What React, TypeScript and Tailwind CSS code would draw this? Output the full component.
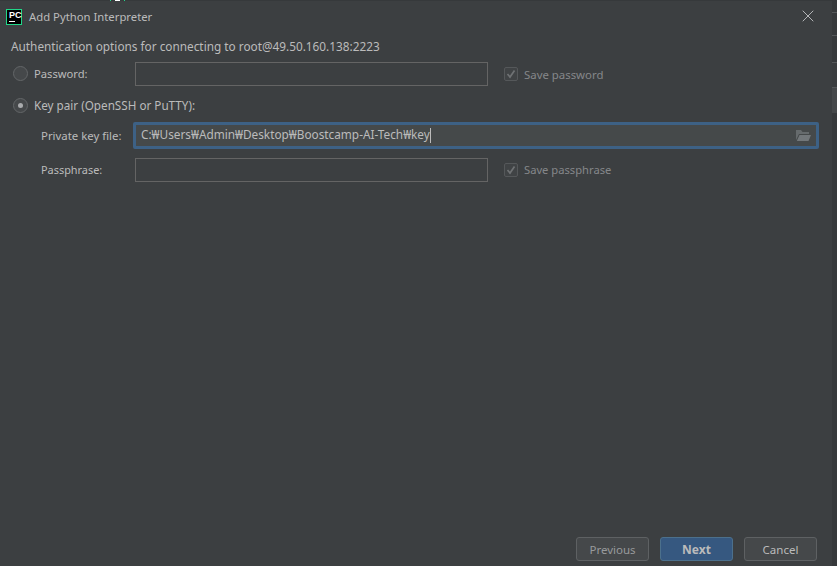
import { X } from "lucide-react"

function Field() {
  return <div className="h-6 w-[353px] border border-[#646464] bg-[#3c3f41]" />
}

function SaveCheck({ label, size }: { label: string; size: string }) {
  return (
    <div className="flex items-center ml-[16px] gap-[6px]">
      <svg width="14" height="14" viewBox="0 0 14 14">
        <rect x="0.5" y="0.5" width="13" height="13" rx="1.5" fill="#404345" stroke="#55585a" />
        <path d="M3.5 7 L6 10 L10.5 3.5" fill="none" stroke="#6f7274" strokeWidth="1.7" />
      </svg>
      <span className={`${size} pt-[2px] text-[#85878a]`}>{label}</span>
    </div>
  )
}

function Radio({ checked }: { checked?: boolean }) {
  return (
    <div className="w-[15px] h-[15px] rounded-full border border-[#636668] bg-[#45484a] flex items-center justify-center">
      {checked && <div className="w-[5px] h-[5px] rounded-full bg-[#a9abad]" />}
    </div>
  )
}

export default function App() {
  return (
    <div className="w-[837px] h-[566px] overflow-hidden bg-[#36393b] flex flex-col font-['Noto_Sans',sans-serif] text-[#bbbbbb]">
      <div className="h-px flex shrink-0">
        <div className="w-[110px]" />
        <div className="w-px bg-[#21d789]" />
        <div className="w-[4px]" />
        <div className="w-[5px] bg-white" />
        <div className="w-[4px]" />
        <div className="w-px bg-[#21d789]" />
      </div>
      <div className="flex-1 flex">
        <div className="w-[832px] bg-[#3c3f41] flex flex-col">
          {/* title bar */}
          <div className="h-[31px] flex items-center pl-[6px] pr-[14px] shrink-0">
            <div className="w-[16px] h-[16px] bg-black border border-[#21d789] flex flex-col items-start pl-[2px] pt-px">
              <span className="font-['Liberation_Sans',sans-serif] font-bold text-[9px] leading-[8px] text-white">PC</span>
              <div className="w-[6px] h-px bg-white mt-[2px]" />
            </div>
            <span className="ml-[7px] pt-px text-[11.3px]">Add Python Interpreter</span>
            <X className="ml-auto -mt-[2px] text-[#b4b6b8]" size={20} strokeWidth={1.2} />
          </div>

          <div className="flex-1 flex flex-col pl-[11px]">
            <p className="text-[11.8px] mt-[6px] leading-[17px]">Authentication options for connecting to root@49.50.160.138:2223</p>

            <div className="flex items-center mt-[7px]">
              <div className="flex items-center gap-[6px] w-[124px] pl-[2px]">
                <Radio />
                <span className="text-[11.2px] pt-px">Password:</span>
              </div>
              <Field />
              <SaveCheck label="Save password" size="text-[11.4px]" />
            </div>

            <div className="flex items-center gap-[6px] pl-[2px] mt-[11px]">
              <Radio checked />
              <span className="text-[11.7px]">Key pair (OpenSSH or PuTTY):</span>
            </div>

            <div className="flex items-center mt-[7px]">
              <span className="text-[11.4px] pt-px w-[122px] pl-[30px]">Private key file:</span>
              <div className="w-[686px] h-[27px] rounded-[2px] border-[3px] border-[#3d6185] bg-[#45494a] flex items-center pl-[5px] pr-[5px]">
                <span className="text-[11.8px]">C:₩Users₩Admin₩Desktop₩Boostcamp-AI-Tech₩key</span>
                <div className="w-px h-[15px] bg-[#bbbbbb]" />
                <svg className="ml-auto" width="15" height="13" viewBox="0 0 15 13">
                  <path d="M0 1h5l1.5 2H13v2H3L0 11z" fill="#666b6d" />
                  <path d="M3.5 6H15l-2.5 6H0.8z" fill="#72777a" />
                </svg>
              </div>
            </div>

            <div className="flex items-center mt-[9px]">
              <span className="text-[10.9px] pt-[2px] w-[124px] pl-[30px]">Passphrase:</span>
              <Field />
              <SaveCheck label="Save passphrase" size="text-[11.2px]" />
            </div>

            <div className="mt-auto mb-[5px] flex justify-end gap-[11px] pr-[15px]">
              <button className="w-[73px] h-6 pt-px rounded-[3px] border border-[#5e6163] bg-[#45484a] text-[11.5px] text-[#989a9c]">Previous</button>
              <button className="w-[73px] h-6 pt-px rounded-[3px] border border-[#4c708c] bg-[#365880] text-[12px] font-bold">Next</button>
              <button className="w-[73px] h-6 pt-px rounded-[3px] border border-[#5e6163] bg-[#45484a] text-[11.5px]">Cancel</button>
            </div>
          </div>
        </div>
        <div className="flex-1 flex flex-col">
          <div className="h-[12px] border-b border-[#55585a]" />
          <div className="h-[23px] border-b border-[#55585a]" />
          <div className="h-[27px] border-b border-[#55585a]" />
          <div className="h-[25px] border-b border-[#55585a] bg-[#3a3d3f]" />
          <div className="h-[25px] bg-[#45484a]" />
        </div>
      </div>
    </div>
  )
}
